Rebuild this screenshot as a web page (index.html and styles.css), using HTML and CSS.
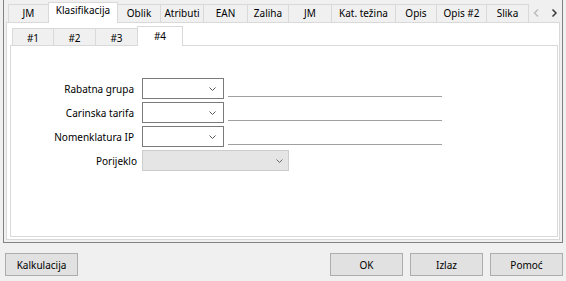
FILE: index.html
```html
<!DOCTYPE html>
<html>
<head>
<meta charset="utf-8">
<link rel="stylesheet" href="styles.css">
</head>
<body>
<div class="frame">
  <div class="tabstrip">
    <div class="tab">JM</div>
    <div class="tab active">Klasifikacija</div>
    <div class="tab">Oblik</div>
    <div class="tab">Atributi</div>
    <div class="tab">EAN</div>
    <div class="tab">Zaliha</div>
    <div class="tab">JM</div>
    <div class="tab">Kat. težina</div>
    <div class="tab">Opis</div>
    <div class="tab">Opis #2</div>
    <div class="tab">Slika</div>
    <svg class="scroll" width="30" height="18" viewBox="0 0 30 18">
      <path d="M8 5.5 L4.5 9 L8 12.5" fill="none" stroke="#bdbdbd" stroke-width="1.5"/>
      <path d="M22.5 5.5 L26 9 L22.5 12.5" fill="none" stroke="#3c3c3c" stroke-width="1.5"/>
    </svg>
  </div>
  <div class="page">
    <div class="subtabstrip">
      <div class="subtab">#1</div>
      <div class="subtab">#2</div>
      <div class="subtab">#3</div>
      <div class="subtab active">#4</div>
    </div>
    <div class="subpage">
      <div class="form">
        <div class="label">Rabatna grupa</div>
        <div class="combo"><svg class="chev" width="7" height="4" viewBox="0 0 7 4"><path d="M0.5 0.5 L3.5 3.5 L6.5 0.5" fill="none" stroke="#5a5a5a"/></svg></div>
        <div class="line"></div>

        <div class="label">Carinska tarifa</div>
        <div class="combo"><svg class="chev" width="7" height="4" viewBox="0 0 7 4"><path d="M0.5 0.5 L3.5 3.5 L6.5 0.5" fill="none" stroke="#5a5a5a"/></svg></div>
        <div class="line"></div>

        <div class="label">Nomenklatura IP</div>
        <div class="combo"><svg class="chev" width="7" height="4" viewBox="0 0 7 4"><path d="M0.5 0.5 L3.5 3.5 L6.5 0.5" fill="none" stroke="#5a5a5a"/></svg></div>
        <div class="line"></div>

        <div class="label label-narrow">Porijeklo</div>
        <div class="combo combo-wide disabled"><svg class="chev" width="7" height="4" viewBox="0 0 7 4"><path d="M0.5 0.5 L3.5 3.5 L6.5 0.5" fill="none" stroke="#6a6a6a"/></svg></div>
      </div>
    </div>
  </div>
</div>
<div class="footer">
  <button class="btn">Kalkulacija</button>
  <button class="btn push">OK</button>
  <button class="btn">Izlaz</button>
  <button class="btn">Pomoć</button>
</div>
</body>
</html>
```
FILE: styles.css
```css
* { box-sizing: border-box; }

body {
  margin: 0;
  width: 566px;
  height: 281px;
  overflow: hidden;
  background: #f0f0f0;
  font-family: "Noto Sans", "Liberation Sans", sans-serif;
  font-size: 10px;
  color: #000;
}

.frame {
  margin-left: 3px;
  width: 560px;
  height: 243px;
  border: 1px solid #828282;
  border-top: none;
  padding: 0 2px 2px;
  display: flex;
  flex-direction: column;
}

.tabstrip {
  flex: none;
  height: 22px;
  padding-left: 2px;
  display: flex;
  align-items: flex-end;
}

.tab {
  flex: none;
  height: 18px;
  border: 1px solid #d9d9d9;
  border-bottom: none;
  margin-left: -1px;
  padding-top: 1px;
  line-height: 14px;
  text-align: center;
  white-space: nowrap;
}
.tab:first-child { margin-left: 0; }
.tab.active {
  height: 21px;
  margin-bottom: -1px;
  padding-top: 0;
  background: #fff;
  position: relative;
  z-index: 1;
}
.tab:nth-child(1) { width: 41px; }
.tab:nth-child(2) { width: 70px; }
.tab:nth-child(3) { width: 44px; }
.tab:nth-child(4) { width: 44px; }
.tab:nth-child(5) { width: 45px; }
.tab:nth-child(6) { width: 42px; }
.tab:nth-child(7) { width: 44px; }
.tab:nth-child(8) { width: 65px; }
.tab:nth-child(9) { width: 42px; }
.tab:nth-child(10) { width: 51px; }
.tab:nth-child(11) { width: 43px; }

.scroll { flex: none; margin-left: auto; display: block; }

.page {
  flex: 1;
  background: #fff;
  border: 1px solid #d9d9d9;
  padding: 0 1px 2px 3px;
  display: flex;
  flex-direction: column;
}

.subtabstrip {
  flex: none;
  height: 22px;
  padding-left: 2px;
  display: flex;
  align-items: flex-end;
}

.subtab {
  flex: none;
  height: 17px;
  border: 1px solid #d9d9d9;
  border-bottom: none;
  margin-left: -1px;
  padding-top: 2px;
  line-height: 14px;
  text-align: center;
  background: #f0f0f0;
}
.subtab:first-child { margin-left: 0; }
.subtab.active {
  height: 20px;
  margin-bottom: -1px;
  background: #fff;
  position: relative;
  z-index: 1;
}
.subtab:nth-child(1) { width: 42px; }
.subtab:nth-child(2) { width: 43px; }
.subtab:nth-child(3) { width: 43px; }
.subtab:nth-child(4) { width: 46px; }

.subpage {
  flex: 1;
  border: 1px solid #d9d9d9;
  padding-top: 32px;
}

.form {
  display: grid;
  grid-template-columns: 131px 82px 218px;
  grid-auto-rows: 21px;
  row-gap: 3px;
}

.label {
  display: flex;
  align-items: center;
  justify-content: flex-end;
  padding-right: 8px;
  white-space: nowrap;
}
.label-narrow { padding-right: 5px; }

.combo {
  border: 1px solid #7a7a7a;
  background: #fff;
  display: flex;
  align-items: center;
  justify-content: flex-end;
  padding-right: 7px;
}
.combo-wide {
  grid-column: span 2;
  width: 147px;
  padding-right: 5px;
}
.combo.disabled {
  background: #e5e5e5;
  border-color: #cccccc;
}
.chev { display: block; }

.line {
  margin-left: 4px;
  height: 19px;
  border-bottom: 1px solid #a0a0a0;
}

.footer {
  display: flex;
  gap: 7px;
  padding: 10px 3px 0 5px;
}

.btn {
  width: 73px;
  height: 23px;
  border: 1px solid #adadad;
  background: #e1e1e1;
  font-family: inherit;
  font-size: 10px;
  color: #000;
  padding: 0;
}
.push { margin-left: auto; }
```
